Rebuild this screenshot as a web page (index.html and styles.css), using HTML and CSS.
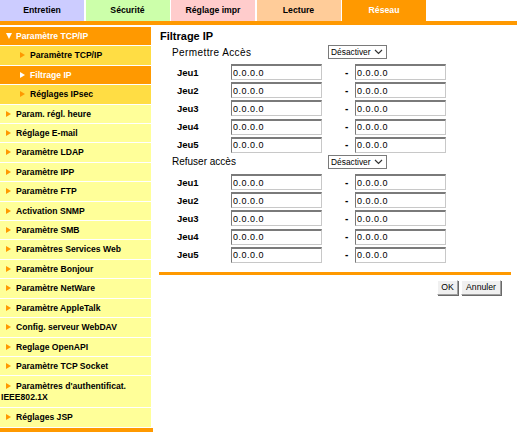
FILE: index.html
```html
<!DOCTYPE html>
<html lang="fr">
<head>
    <meta charset="UTF-8">
    <title>Filtrage IP</title>
    <link rel="stylesheet" href="styles.css">
</head>
<body>
    <div class="tabs">
        <div class="tab tab-maint">Entretien</div>
        <div class="tab tab-secu">Sécurité</div>
        <div class="tab tab-print">Réglage impr</div>
        <div class="tab tab-scan">Lecture</div>
        <div class="tab tab-net">Réseau</div>
    </div>
    <div class="tab-bar"></div>

    <div class="page">
        <nav class="menu">
            <div class="item item-open"><span class="down"></span>Paramètre TCP/IP</div>
            <div class="item item-sub"><span class="arrow"></span>Paramètre TCP/IP</div>
            <div class="item item-sub item-active"><span class="arrow"></span>Filtrage IP</div>
            <div class="item item-sub"><span class="arrow"></span>Réglages IPsec</div>
            <div class="item"><span class="arrow"></span>Param. régl. heure</div>
            <div class="item"><span class="arrow"></span>Réglage E-mail</div>
            <div class="item"><span class="arrow"></span>Paramètre LDAP</div>
            <div class="item"><span class="arrow"></span>Paramètre IPP</div>
            <div class="item"><span class="arrow"></span>Paramètre FTP</div>
            <div class="item"><span class="arrow"></span>Activation SNMP</div>
            <div class="item"><span class="arrow"></span>Paramètre SMB</div>
            <div class="item"><span class="arrow"></span>Paramètres Services Web</div>
            <div class="item"><span class="arrow"></span>Paramètre Bonjour</div>
            <div class="item"><span class="arrow"></span>Paramètre NetWare</div>
            <div class="item"><span class="arrow"></span>Paramètre AppleTalk</div>
            <div class="item"><span class="arrow"></span>Config. serveur WebDAV</div>
            <div class="item"><span class="arrow"></span>Reglage OpenAPI</div>
            <div class="item"><span class="arrow"></span>Paramètre TCP Socket</div>
            <div class="item item-wrap"><span class="arrow"></span>Paramètres d'authentificat. IEEE802.1X</div>
            <div class="item"><span class="arrow"></span>Réglages JSP</div>
            <div class="menu-end"></div>
        </nav>

        <main class="content">
            <h2>Filtrage IP</h2>

            <div class="group">
                <div class="group-head">
                    <span class="group-label label-allow">Permettre Accès</span>
                    <span class="select">Désactiver <svg width="9" height="6" viewBox="0 0 9 6"><path d="M1 1 L4.5 4.5 L8 1" fill="none" stroke="#333" stroke-width="1.2"/></svg></span>
                </div>
                <div class="range"><span class="jeu">Jeu1</span><input type="text" value="0.0.0.0"><span class="dash">-</span><input type="text" value="0.0.0.0"></div>
                <div class="range"><span class="jeu">Jeu2</span><input type="text" value="0.0.0.0"><span class="dash">-</span><input type="text" value="0.0.0.0"></div>
                <div class="range"><span class="jeu">Jeu3</span><input type="text" value="0.0.0.0"><span class="dash">-</span><input type="text" value="0.0.0.0"></div>
                <div class="range"><span class="jeu">Jeu4</span><input type="text" value="0.0.0.0"><span class="dash">-</span><input type="text" value="0.0.0.0"></div>
                <div class="range"><span class="jeu">Jeu5</span><input type="text" value="0.0.0.0"><span class="dash">-</span><input type="text" value="0.0.0.0"></div>
            </div>

            <div class="group">
                <div class="group-head">
                    <span class="group-label">Refuser accès</span>
                    <span class="select">Désactiver <svg width="9" height="6" viewBox="0 0 9 6"><path d="M1 1 L4.5 4.5 L8 1" fill="none" stroke="#333" stroke-width="1.2"/></svg></span>
                </div>
                <div class="range"><span class="jeu">Jeu1</span><input type="text" value="0.0.0.0"><span class="dash">-</span><input type="text" value="0.0.0.0"></div>
                <div class="range"><span class="jeu">Jeu2</span><input type="text" value="0.0.0.0"><span class="dash">-</span><input type="text" value="0.0.0.0"></div>
                <div class="range"><span class="jeu">Jeu3</span><input type="text" value="0.0.0.0"><span class="dash">-</span><input type="text" value="0.0.0.0"></div>
                <div class="range"><span class="jeu">Jeu4</span><input type="text" value="0.0.0.0"><span class="dash">-</span><input type="text" value="0.0.0.0"></div>
                <div class="range"><span class="jeu">Jeu5</span><input type="text" value="0.0.0.0"><span class="dash">-</span><input type="text" value="0.0.0.0"></div>
            </div>

            <div class="rule"></div>
            <div class="actions">
                <button class="btn btn-ok">OK</button>
                <button class="btn btn-cancel">Annuler</button>
            </div>
        </main>
    </div>
</body>
</html>
```

FILE: styles.css
```css
body {
    margin: 0;
    font-family: 'Liberation Sans', Arial, sans-serif;
    font-size: 10px;
    color: #000;
    background-color: #fff;
}

/* top tabs */
.tabs {
    display: flex;
    gap: 1.5px;
    height: 21px;
}

.tab {
    width: 84px;
    line-height: 21px;
    text-align: center;
    font-weight: bold;
    font-size: 8.7px;
}

.tab-maint { background-color: #ccccff; }
.tab-secu { background-color: #ccffaa; }
.tab-print { background-color: #ffcccc; }
.tab-scan { background-color: #ffcc99; }
.tab-net { background-color: #ff9900; color: #fff; }

.tab-bar {
    height: 4px;
    background-color: #ff9900;
}

.page {
    display: flex;
    margin-top: 2px;
}

/* left menu */
.menu {
    width: 153px;
    flex-shrink: 0;
}

.item {
    width: 151px;
    box-sizing: border-box;
    padding: 3px 0 3px 1px;
    line-height: 12.4px;
    border-bottom: 1px solid #fff;
    background-color: #ffff99;
    font-weight: bold;
    font-size: 8.6px;
}

.item-open {
    background-color: #ff9900;
    color: #fff;
}

.item-sub {
    background-color: #ffdd44;
    padding-left: 15px;
}

.item-active {
    background-color: #ff9900;
    color: #fff;
}

.item-wrap {
    line-height: 11px;
    padding-top: 4.4px;
    padding-bottom: 4.4px;
}

.arrow {
    display: inline-block;
    width: 0;
    height: 0;
    margin: 0 5px 0 5px;
    border-left: 5px solid #ff9900;
    border-top: 3.5px solid transparent;
    border-bottom: 3.5px solid transparent;
    vertical-align: 0;
}

.item-active .arrow {
    border-left-color: #fff;
}

.down {
    display: inline-block;
    width: 0;
    height: 0;
    margin: 0 4px 0 5px;
    border-top: 6px solid #fff;
    border-left: 3.5px solid transparent;
    border-right: 3.5px solid transparent;
    vertical-align: 0;
}

.menu-end {
    height: 4px;
    background-color: #ff9900;
}

/* main form */
.content {
    margin-left: 6px;
    width: 352px;
}

h2 {
    margin: 0;
    padding-left: 1px;
    height: 17px;
    line-height: 18px;
    font-size: 11px;
    font-weight: bold;
}

.group-head {
    display: flex;
    align-items: center;
    height: 16px;
    margin-bottom: 3px;
    font-size: 10px;
}

.group-label {
    width: 156px;
    padding-left: 13px;
}

.label-allow {
    letter-spacing: 0.4px;
}

.select {
    display: flex;
    align-items: center;
    justify-content: space-between;
    width: 59px;
    box-sizing: border-box;
    height: 14px;
    padding: 0 3px 0 2px;
    border: 1px solid #7a7a7a;
    font-size: 8.4px;
    background-color: #fff;
}

.range {
    display: flex;
    align-items: center;
    height: 18.2px;
}

.jeu {
    width: 54px;
    padding-left: 18px;
    font-weight: bold;
    font-size: 9.5px;
}

.range input {
    width: 91px;
    height: 16px;
    box-sizing: border-box;
    margin: 0;
    padding: 0 1px;
    border: 1px solid #c8c8c8;
    border-top: 2px solid #7a7a7a;
    border-left: 1px solid #7a7a7a;
    font-family: 'Liberation Sans', Arial, sans-serif;
    font-size: 9px;
    letter-spacing: 0.5px;
    color: #000;
}

.dash {
    width: 33px;
    box-sizing: border-box;
    padding-left: 23px;
    font-weight: bold;
}

.rule {
    height: 3px;
    margin-top: 8px;
    background-color: #ff9900;
}

.actions {
    display: flex;
    justify-content: flex-end;
    gap: 3px;
    margin-top: 5px;
    padding-right: 10px;
}

.btn {
    height: 15px;
    padding: 0;
    font-family: 'Liberation Sans', Arial, sans-serif;
    font-size: 8.7px;
    line-height: 12px;
    color: #000;
    background-color: #f0f0f0;
    border: 1px solid #a0a0a0;
    border-top-color: #fff;
    border-left-color: #fff;
    box-shadow: 1px 1px 0 #696969;
}

.btn-ok {
    width: 21px;
}

.btn-cancel {
    width: 40px;
}
```
